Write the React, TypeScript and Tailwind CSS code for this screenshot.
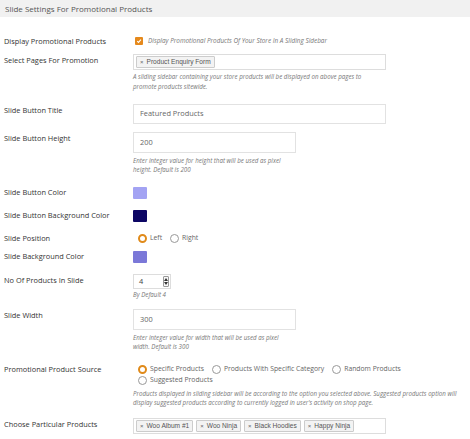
import React from "react"

const font = { fontFamily: '"Open Sans", "Liberation Sans", sans-serif' }

function Label({ children, lh = "leading-[12px]" }: { children: React.ReactNode; lh?: string }) {
  return (
    <div className={`w-[133px] shrink-0 pl-[4px] text-[7.4px] text-[#333] ${lh}`}>{children}</div>
  )
}

function Help({ children, className = "" }: { children: React.ReactNode; className?: string }) {
  return <div className={`text-[6.2px] italic text-[#777] leading-[9px] ${className}`}>{children}</div>
}

function Chip({ text }: { text: string }) {
  return (
    <span
      className="inline-flex items-center h-[12px] px-[3px] border border-[#ccc] bg-[#f3f3f3] rounded-[1px] text-[6.6px] text-[#555] leading-none"
      style={{ fontFamily: '"Liberation Sans", Arial, sans-serif' }}
    >
      <span className="text-[6px] mr-[3px] text-[#666]">×</span>
      {text}
    </span>
  )
}

function Radio({ checked, label }: { checked?: boolean; label: string }) {
  return (
    <span className="inline-flex items-center gap-[3px] text-[6.8px] text-[#666]">
      <span
        className={`w-[9px] h-[9px] rounded-full bg-white ${checked ? "border-[2.5px] border-[#e08a1a]" : "border border-[#999]"}`}
      />
      {label}
    </span>
  )
}

function Swatch({ color }: { color: string }) {
  return <div className={`w-[14px] h-[12px] rounded-[1px] ${color}`} />
}

export default function App() {
  return (
    <div className="w-[470px] h-[439px] bg-white overflow-hidden" style={font}>
      <div className="h-[17px] bg-[#f1f1f1] px-[5px] flex items-center text-[8px] text-[#555]">
        Slide Settings For Promotional Products
      </div>

      {/* Display promotional products */}
      <div className="flex mt-[19px]">
        <Label lh="leading-[10px]">Display Promotional Products</Label>
        <div className="flex items-center h-[10px] pl-[2px]">
          <span className="w-[8px] h-[8px] bg-[#e5891c] rounded-[1px] flex items-center justify-center">
            <svg width="6" height="6" viewBox="0 0 10 10">
              <path d="M2 5.2 L4.2 7.3 L8.2 2.8" stroke="white" strokeWidth="1.8" fill="none" />
            </svg>
          </span>
          <span className="ml-[5px] text-[6.4px] italic text-[#777]">Display Promotional Products Of Your Store In A Sliding Sidebar</span>
        </div>
      </div>

      {/* Select pages */}
      <div className="flex mt-[8px]">
        <Label>Select Pages For Promotion</Label>
        <div className="w-[253px]">
          <div className="h-[16px] border border-[#ddd] flex items-center px-[2px]">
            <Chip text="Product Enquiry Form" />
          </div>
          <Help className="mt-[2px] leading-[10px]">
            A sliding sidebar containing your store products will be displayed on above pages to promote products sitewide.
          </Help>
        </div>
      </div>

      {/* Slide button title */}
      <div className="flex mt-[12px]">
        <Label>Slide Button Title</Label>
        <div className="w-[253px] h-[20px] border border-[#e2e2e2] flex items-center px-[6px] text-[7.4px] text-[#666]">
          Featured Products
        </div>
      </div>

      {/* Slide button height */}
      <div className="flex mt-[8px]">
        <Label>Slide Button Height</Label>
        <div className="w-[163px]">
          <div className="h-[21px] border border-[#e2e2e2] flex items-center px-[6px] text-[7.4px] text-[#666]">200</div>
          <Help className="mt-[3px]">Enter integer value for height that will be used as pixel height. Default is 200</Help>
        </div>
      </div>

      <div className="flex mt-[13px]">
        <Label lh="leading-[11px]">Slide Button Color</Label>
        <Swatch color="bg-[#a3a3f3]" />
      </div>

      <div className="flex mt-[11px]">
        <Label lh="leading-[11px]">Slide Button Background Color</Label>
        <Swatch color="bg-[#0d0664]" />
      </div>

      <div className="flex mt-[11px]">
        <Label lh="leading-[10px]">Slide Position</Label>
        <div className="flex items-center h-[10px] gap-[8px] pl-[5px]">
          <Radio checked label="Left" />
          <Radio label="Right" />
        </div>
      </div>

      <div className="flex mt-[8px]">
        <Label lh="leading-[11px]">Slide Background Color</Label>
        <Swatch color="bg-[#7b78d8]" />
      </div>

      {/* Number of products */}
      <div className="flex mt-[11px]">
        <Label>No Of Products In Slide</Label>
        <div>
          <div className="w-[38px] h-[15px] border border-[#ddd] flex items-center justify-between pl-[5px] pr-[1px] text-[7.4px] text-[#444]">
            4
            <span className="w-[6px] h-[11px] border border-[#999] rounded-[1px] flex flex-col items-center justify-around bg-[#f7f7f7]">
              <svg width="4" height="3" viewBox="0 0 4 3"><path d="M0 3 L2 0 L4 3 Z" fill="#333" /></svg>
              <svg width="4" height="3" viewBox="0 0 4 3"><path d="M0 0 L2 3 L4 0 Z" fill="#333" /></svg>
            </span>
          </div>
          <Help className="mt-[1px]">By Default 4</Help>
        </div>
      </div>

      {/* Slide width */}
      <div className="flex mt-[10px]">
        <Label>Slide Width</Label>
        <div className="w-[163px]">
          <div className="h-[21px] border border-[#e2e2e2] flex items-center px-[6px] text-[7.4px] text-[#666]">300</div>
          <Help className="mt-[3px]">Enter integer value for width that will be used as pixel width. Default is 300</Help>
        </div>
      </div>

      {/* Product source */}
      <div className="flex mt-[13px]">
        <Label lh="leading-[10px]">Promotional Product Source</Label>
        <div className="w-[337px]">
          <div className="flex flex-wrap gap-y-[1px] gap-x-[8px] pl-[5px] leading-[10px]">
            <Radio checked label="Specific Products" />
            <Radio label="Products With Specific Category" />
            <Radio label="Random Products" />
            <Radio label="Suggested Products" />
          </div>
          <Help className="mt-[4px]">
            Products displayed in sliding sidebar will be according to the option you selected above. Suggested products option will display suggested products according to currently logged in user's activity on shop page.
          </Help>
        </div>
      </div>

      {/* Particular products */}
      <div className="flex mt-[11px]">
        <Label>Choose Particular Products</Label>
        <div className="w-[253px] h-[16px] border border-[#ddd] flex items-center gap-[3px] px-[2px]">
          <Chip text="Woo Album #1" />
          <Chip text="Woo Ninja" />
          <Chip text="Black Hoodies" />
          <Chip text="Happy Ninja" />
        </div>
      </div>
    </div>
  )
}
